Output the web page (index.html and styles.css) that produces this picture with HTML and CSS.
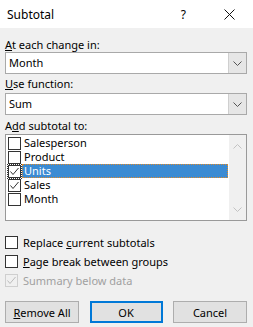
FILE: index.html
```html
<!DOCTYPE html>
<html lang="en">
<head>
  <meta charset="UTF-8" />
  <title>Subtotal</title>
  <link rel="stylesheet" href="styles.css">
</head>
<body>
  <div class="dialog">

    <!-- Barra de titulo -->
    <div class="titlebar">
      <span class="title">Subtotal</span>
      <span class="help">?</span>
      <svg class="close" width="11" height="11" viewBox="0 0 11 11">
        <path d="M0.5 0.5 L10.5 10.5 M10.5 0.5 L0.5 10.5" stroke="#111" stroke-width="1" fill="none"/>
      </svg>
    </div>

    <div class="content">
      <label class="field-label first"><u>A</u>t each change in:</label>
      <div class="combo">
        <span class="combo-value">Month</span>
        <span class="combo-btn">
          <svg width="9" height="5" viewBox="0 0 9 5"><path d="M0.5 0.5 L4.5 4.5 L8.5 0.5" stroke="#555" fill="none"/></svg>
        </span>
      </div>

      <label class="field-label"><u>U</u>se function:</label>
      <div class="combo">
        <span class="combo-value">Sum</span>
        <span class="combo-btn">
          <svg width="9" height="5" viewBox="0 0 9 5"><path d="M0.5 0.5 L4.5 4.5 L8.5 0.5" stroke="#555" fill="none"/></svg>
        </span>
      </div>

      <label class="field-label third">A<u>d</u>d subtotal to:</label>
      <div class="listbox">
        <ul class="items">
          <li class="item"><span class="box"></span><span class="text">Salesperson</span></li>
          <li class="item"><span class="box"></span><span class="text">Product</span></li>
          <li class="item selected">
            <span class="box checked focus">
              <svg width="11" height="11" viewBox="0 0 11 11"><path d="M1.5 5.5 L4 8.5 L9.5 2" stroke="#333" fill="none"/></svg>
            </span>
            <span class="text">Units</span>
          </li>
          <li class="item">
            <span class="box checked">
              <svg width="11" height="11" viewBox="0 0 11 11"><path d="M1.5 5.5 L4 8.5 L9.5 2" stroke="#333" fill="none"/></svg>
            </span>
            <span class="text">Sales</span>
          </li>
          <li class="item"><span class="box"></span><span class="text">Month</span></li>
        </ul>
        <div class="scrollbar">
          <svg width="9" height="5" viewBox="0 0 9 5"><path d="M0.5 4.5 L4.5 0.5 L8.5 4.5" stroke="#c2c2c2" fill="none"/></svg>
          <svg width="9" height="5" viewBox="0 0 9 5"><path d="M0.5 0.5 L4.5 4.5 L8.5 0.5" stroke="#c2c2c2" fill="none"/></svg>
        </div>
      </div>

      <div class="options">
        <div class="option"><span class="box"></span><span>Replace <u>c</u>urrent subtotals</span></div>
        <div class="option"><span class="box"></span><span><u>P</u>age break between groups</span></div>
        <div class="option disabled">
          <span class="box">
            <svg width="11" height="11" viewBox="0 0 11 11"><path d="M1.5 5.5 L4 8.5 L9.5 2" stroke="#bcbcbc" fill="none"/></svg>
          </span>
          <span>Summary below data</span>
        </div>
      </div>

      <div class="buttons">
        <button class="btn remove"><u>R</u>emove All</button>
        <button class="btn ok">OK</button>
        <button class="btn cancel">Cancel</button>
      </div>
    </div>
  </div>
</body>
</html>
```

FILE: styles.css
```css
body {
  margin: 0;
  font-family: "Noto Sans", "Open Sans", sans-serif;
  font-size: 11px;
  color: #000;
  background-color: #f0f0f0;
}

.dialog {
  width: 253px;
  height: 327px;
  background-color: #f0f0f0;
}

/* Barra de titulo */
.titlebar {
  height: 28px;
  background-color: #fff;
  display: flex;
  align-items: center;
  padding-left: 7px;
}

.title {
  font-size: 12px;
  flex: 1;
}

.help {
  font-size: 12px;
  margin-right: 38px;
}

.close {
  margin-right: 18px;
}

.content {
  padding: 0 6px 0 5px;
}

.field-label {
  display: block;
  height: 15px;
  line-height: 15px;
  margin-top: 2px;
  margin-bottom: 2px;
}

.field-label.first {
  margin-top: 9px;
  margin-bottom: 0;
}

.field-label.third {
  margin-top: 3px;
  margin-bottom: 1px;
}

/* Combos */
.combo {
  height: 20px;
  border: 1px solid #a9a9a9;
  background-color: #fff;
  display: flex;
  align-items: stretch;
}

.combo-value {
  flex: 1;
  line-height: 20px;
  padding-left: 3px;
}

.combo-btn {
  width: 17px;
  background-color: #e6e6e6;
  border-left: 1px solid #cfcfcf;
  display: flex;
  align-items: center;
  justify-content: center;
}

/* Lista */
.listbox {
  height: 85px;
  border: 1px solid #999;
  background-color: #fff;
  display: flex;
}

.items {
  list-style: none;
  margin: 0;
  padding: 1px 0 0 2px;
  flex: 1;
}

.item {
  height: 14px;
  display: flex;
  align-items: center;
}

.item .text {
  height: 14px;
  line-height: 14px;
  padding-left: 2px;
  flex: 1;
  margin-left: 1px;
  margin-right: 1px;
}

.item.selected .text {
  background-color: #3b8bd3;
  color: #fff;
  outline: 1px dotted #e08a2a;
  outline-offset: -1px;
}

.box {
  width: 11px;
  height: 11px;
  border: 1px solid #333;
  background-color: #fff;
  display: flex;
  align-items: center;
  justify-content: center;
  flex-shrink: 0;
}

.box.focus {
  outline: 1px dotted #333;
  outline-offset: 0;
}

.scrollbar {
  width: 17px;
  background-color: #f0f0f0;
  display: flex;
  flex-direction: column;
  justify-content: space-between;
  align-items: center;
  padding: 9px 0 8px;
}

/* Opciones */
.options {
  margin-top: 12px;
}

.option {
  height: 19px;
  display: flex;
  align-items: center;
  gap: 5px;
}

.option .box {
  border-color: #333;
}

.option.disabled {
  color: #a0a0a0;
}

.option.disabled .box {
  border-color: #cfcfcf;
  background-color: #f0f0f0;
}

/* Botones */
.buttons {
  margin-top: 11px;
  display: flex;
  justify-content: space-between;
}

.btn {
  height: 22px;
  font-family: inherit;
  font-size: 11px;
  background-color: #e1e1e1;
  border: 1px solid #adadad;
  padding: 0;
  color: #000;
}

.remove {
  width: 74px;
}

.ok {
  width: 73px;
  border: 2px solid #0078d7;
}

.cancel {
  width: 74px;
}
```
